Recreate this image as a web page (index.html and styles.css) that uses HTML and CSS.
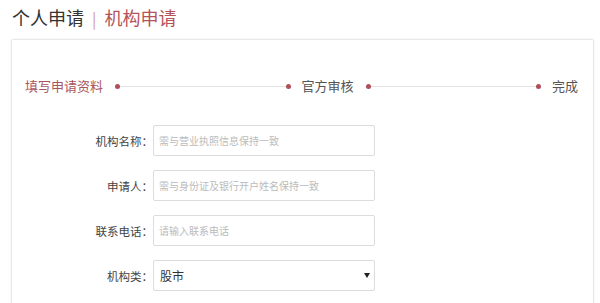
FILE: index.html
```html
<!DOCTYPE html>
<html lang="zh-CN">
<head>
  <meta charset="UTF-8" />
  <meta name="viewport" content="width=device-width, initial-scale=1.0" />
  <title>机构申请</title>
  <link rel="stylesheet" href="styles.css">
</head>
<body>
  <div class="page">
    <h1 class="tabs">
      <span class="tab">个人申请</span>
      <span class="sep">|</span>
      <span class="tab active">机构申请</span>
    </h1>

    <div class="panel">
      <div class="steps">
        <span class="step current">填写申请资料</span>
        <div class="track"><i class="dot"></i><span class="line"></span><i class="dot"></i></div>
        <span class="step">官方审核</span>
        <div class="track"><i class="dot"></i><span class="line"></span><i class="dot"></i></div>
        <span class="step">完成</span>
      </div>

      <form class="apply-form">
        <div class="row">
          <label>机构名称：</label>
          <input type="text" placeholder="需与营业执照信息保持一致">
        </div>
        <div class="row">
          <label>申请人：</label>
          <input type="text" placeholder="需与身份证及银行开户姓名保持一致">
        </div>
        <div class="row">
          <label>联系电话：</label>
          <input type="text" placeholder="请输入联系电话">
        </div>
        <div class="row">
          <label>机构类：</label>
          <div class="select-wrap">
            <select>
              <option>股市</option>
              <option>基金</option>
              <option>银行</option>
            </select>
          </div>
        </div>
      </form>
    </div>
  </div>
</body>
</html>
```

FILE: styles.css
```css
body {
  margin: 0;
  padding: 0;
  background-color: #fff;
  color: #333;
  font-family: "Noto Sans CJK SC", "Noto Sans", sans-serif;
  overflow: hidden;
}
.page {
  margin: 0 6px 0 11px;
}
.tabs {
  margin: 0;
  font-size: 18px;
  font-weight: normal;
  line-height: 34px;
  color: #333;
  padding-left: 1px;
}
.sep {
  color: #d49ca1;
  margin: 0 4px;
  font-size: 16px;
}
.tab.active {
  color: #b5525a;
}
.panel {
  margin-top: 4px;
  border: 1px solid #e8e8e8;
  border-radius: 2px;
  box-shadow: 0 0 3px rgba(0, 0, 0, 0.06);
  padding: 37px 15px 0 13px;
  height: 280px;
}
.steps {
  display: flex;
  align-items: center;
  line-height: 18px;
}
.step {
  font-size: 13px;
  color: #555;
  white-space: nowrap;
}
.step.current {
  color: #a8565e;
}
.track {
  flex: 1;
  display: flex;
  align-items: center;
  margin: 0 11px 0 12px;
}
.dot {
  width: 5px;
  height: 5px;
  border-radius: 50%;
  background-color: #b04e5a;
}
.line {
  flex: 1;
  height: 1px;
  background-color: #e2e2e2;
}
.apply-form {
  margin: 30px 0 0 -1px;
}
.row {
  display: flex;
  align-items: center;
  margin-bottom: 14px;
}
.row label {
  width: 129px;
  flex-shrink: 0;
  text-align: right;
  font-size: 11.5px;
  color: #444;
}
.row input, .row select {
  width: 222px;
  height: 31px;
  box-sizing: border-box;
  border: 1px solid #dcdcdc;
  border-radius: 2px;
  padding: 0 5px;
  font-family: inherit;
  background-color: #fff;
  outline: none;
}
.row input {
  font-size: 10px;
  color: #333;
}
.row input::placeholder {
  color: #bbb;
}
.select-wrap {
  position: relative;
}
.row select {
  appearance: none;
  -webkit-appearance: none;
  font-size: 12px;
  color: #333;
  padding-left: 6px;
}
.select-wrap::after {
  content: "";
  position: absolute;
  right: 5px;
  top: 13px;
  border-left: 3px solid transparent;
  border-right: 3px solid transparent;
  border-top: 5px solid #222;
  pointer-events: none;
}
```
